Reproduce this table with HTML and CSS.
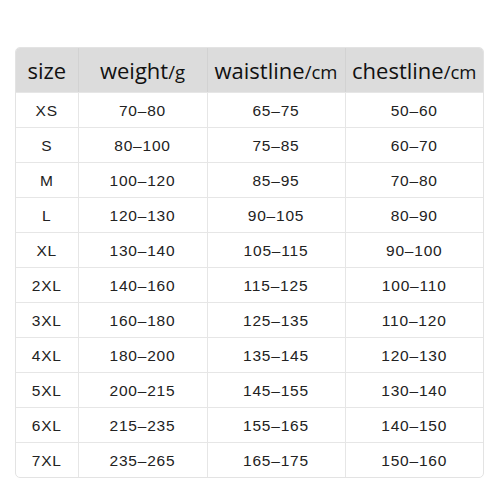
FILE: index.html
```html
<!DOCTYPE html>
<html>
<head>
<meta charset="utf-8">
<link rel="stylesheet" href="styles.css">
</head>
<body>
<div class="frame">
<table class="sizes">
<colgroup><col class="c1"><col class="c2"><col class="c3"><col class="c4"></colgroup>
<thead>
<tr><th class="h-size">size</th><th>weight<span class="unit">/g</span></th><th>waistline<span class="unit">/cm</span></th><th>chestline<span class="unit">/cm</span></th></tr>
</thead>
<tbody>
<tr><td>XS</td><td>70–80</td><td>65–75</td><td>50–60</td></tr>
<tr><td>S</td><td>80–100</td><td>75–85</td><td>60–70</td></tr>
<tr><td>M</td><td>100–120</td><td>85–95</td><td>70–80</td></tr>
<tr><td>L</td><td>120–130</td><td>90–105</td><td>80–90</td></tr>
<tr><td>XL</td><td>130–140</td><td>105–115</td><td>90–100</td></tr>
<tr><td>2XL</td><td>140–160</td><td>115–125</td><td>100–110</td></tr>
<tr><td>3XL</td><td>160–180</td><td>125–135</td><td>110–120</td></tr>
<tr><td>4XL</td><td>180–200</td><td>135–145</td><td>120–130</td></tr>
<tr><td>5XL</td><td>200–215</td><td>145–155</td><td>130–140</td></tr>
<tr><td>6XL</td><td>215–235</td><td>155–165</td><td>140–150</td></tr>
<tr><td>7XL</td><td>235–265</td><td>165–175</td><td>150–160</td></tr>
</tbody>
</table>
</div>
</body>
</html>
```
FILE: styles.css
```css
html, body {
  margin: 0;
  padding: 0;
  background: #ffffff;
}
.frame {
  margin: 47px 0 0 15px;
  width: 469px;
  box-sizing: border-box;
  border: 1px solid #e3e3e3;
  border-radius: 5px;
  overflow: hidden;
}
.sizes {
  width: 100%;
  border-collapse: collapse;
  table-layout: fixed;
}
.c1 { width: 62px; }
.c2 { width: 129px; }
.c3 { width: 138px; }
.c4 { width: 138px; }
.sizes th {
  height: 44px;
  padding: 0;
  background: #dcdcdc;
  font-family: "Open Sans", "Noto Sans", sans-serif;
  font-weight: 400;
  font-size: 22px;
  color: #111;
  text-align: center;
  white-space: nowrap;
  border-right: 1px solid #d2d2d2;
  border-bottom: 1px solid #e6e6e6;
  overflow: visible;
}
.sizes th:last-child, .sizes td:last-child { border-right: none; }
.sizes th .unit { font-size: 18.5px; }
.sizes td {
  height: 33px;
  padding: 1px 0 0 0;
  font-family: "Liberation Sans", Arial, sans-serif;
  font-size: 15.5px;
  letter-spacing: 0.8px;
  color: #222;
  text-align: center;
  border-right: 1px solid #e6e6e6;
  border-bottom: 1px solid #e6e6e6;
}
.sizes tr:last-child td { border-bottom: none; }
```
